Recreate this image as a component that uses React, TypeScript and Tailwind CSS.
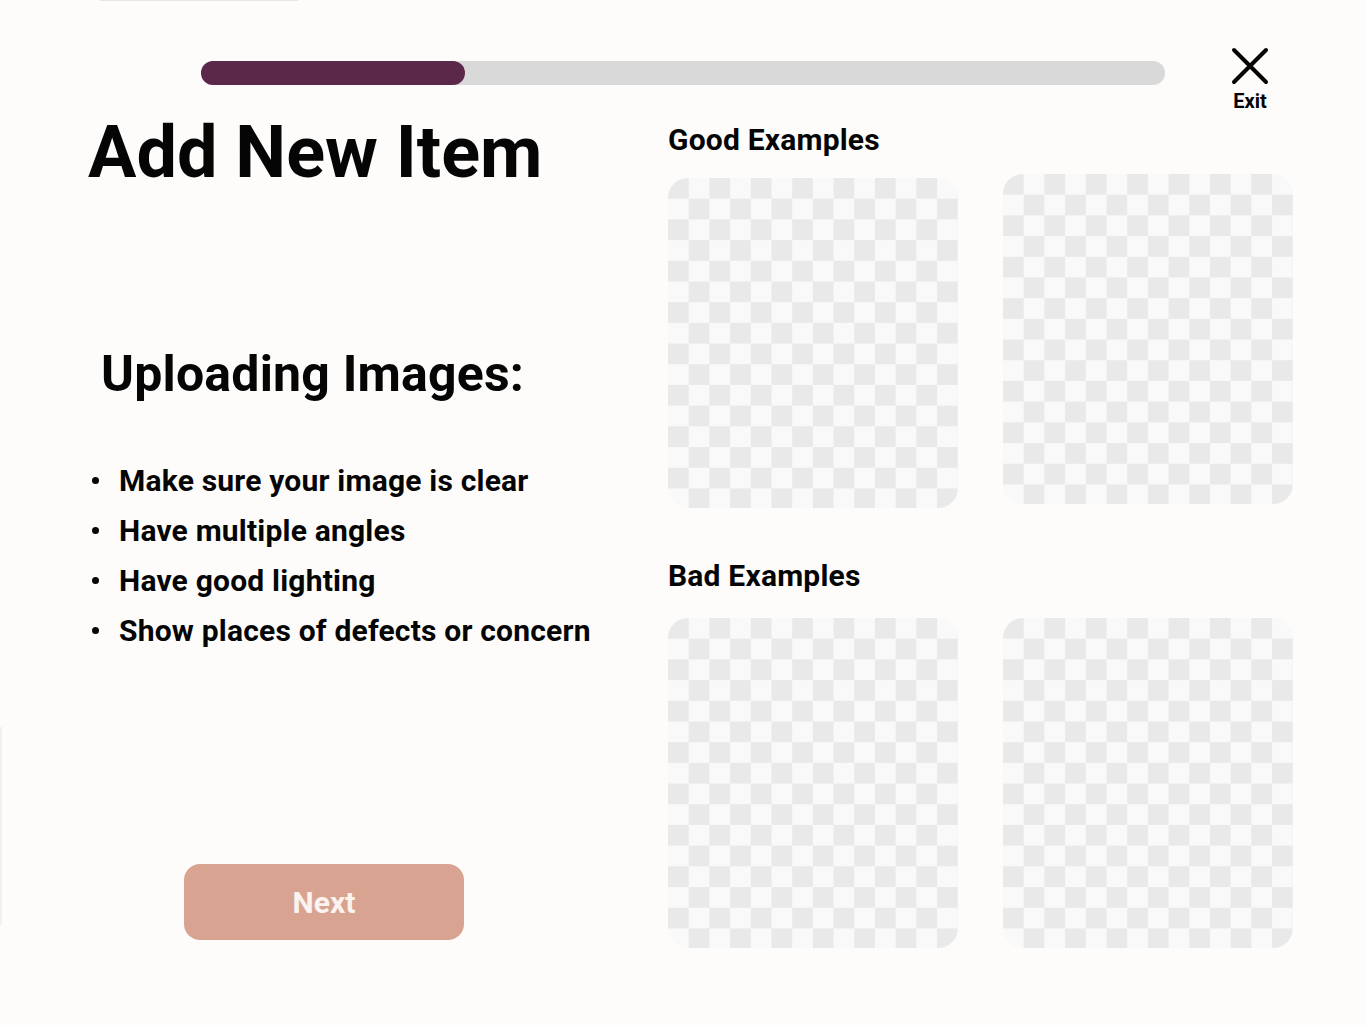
const checker =
  'rounded-[20px] bg-[repeating-conic-gradient(#f9f9f9_0%_25%,#e9e9e9_0%_50%)] bg-[length:41.4px_41.4px] h-[330px] w-[290px]';

const tips = [
  'Make sure your image is clear',
  'Have multiple angles',
  'Have good lighting',
  'Show places of defects or concern',
];

function ExampleGroup({ title, offsetFirst }: { title: string; offsetFirst?: boolean }) {
  return (
    <>
      <h2 className="text-[30px] font-bold leading-none tracking-[0.2px]">{title}</h2>
      <div className={`flex items-start gap-[45px] ${offsetFirst ? 'mt-[19px]' : 'mt-[27px]'}`}>
        <div className={`${checker} ${offsetFirst ? 'mt-[4px]' : ''}`} />
        <div className={checker} />
      </div>
    </>
  );
}

export default function App() {
  return (
    <div className="min-h-[1025px] w-full bg-[#fdfcfa] font-['Roboto',sans-serif] text-[#050505]">
      <div className="ml-[100px] h-px w-[198px] bg-[#e6e6e6]" />

      {/* Header: progress + exit */}
      <header className="flex h-[111px] items-start">
        <div className="ml-[201px] mt-[60px] h-6 w-[964px] rounded-full bg-[#d9d9d9]">
          <div className="h-full w-[264px] rounded-full bg-[#5c284a]" />
        </div>
        <button className="ml-[65px] mt-[46px] flex flex-col items-center">
          <svg width="40" height="40" viewBox="0 0 40 40" fill="none" stroke="#050505" strokeWidth="4" strokeLinecap="round">
            <path d="M4 3 L36 35 M36 3 L4 35" />
          </svg>
          <span className="mt-[4px] text-[20px] font-bold leading-none">Exit</span>
        </button>
      </header>

      <main className="flex">
        {/* Left column */}
        <section className="flex w-[668px] flex-col">
          <h1 className="ml-[88px] mt-[5px] text-[72px] font-bold leading-none">Add New Item</h1>
          <h2 className="ml-[101px] mt-[160px] text-[50px] font-bold leading-none tracking-[0.2px]">Uploading Images:</h2>
          <ul className="ml-[90px] mt-[56px] flex flex-col">
            {tips.map((t) => (
              <li key={t} className="flex h-[50px] items-center text-[30px] font-bold tracking-[0.2px]">
                <span className="ml-[2px] mr-[20px] h-[7px] w-[7px] shrink-0 rounded-full bg-[#050505]" />
                {t}
              </li>
            ))}
          </ul>
          <div className="mt-[72px] flex items-start">
            <div className="h-[198px] w-[2px] bg-[#f0f0f0]" />
            <button className="ml-[182px] mt-[137px] flex h-[76px] w-[280px] items-center justify-center rounded-2xl bg-[#d9a391] text-[30px] font-bold text-[#fbf3ef]">
              Next
            </button>
          </div>
        </section>

        {/* Right column */}
        <section className="flex flex-col pt-[13px]">
          <ExampleGroup title="Good Examples" offsetFirst />
          <div className="mt-[53px]">
            <ExampleGroup title="Bad Examples" />
          </div>
        </section>
      </main>
    </div>
  );
}
